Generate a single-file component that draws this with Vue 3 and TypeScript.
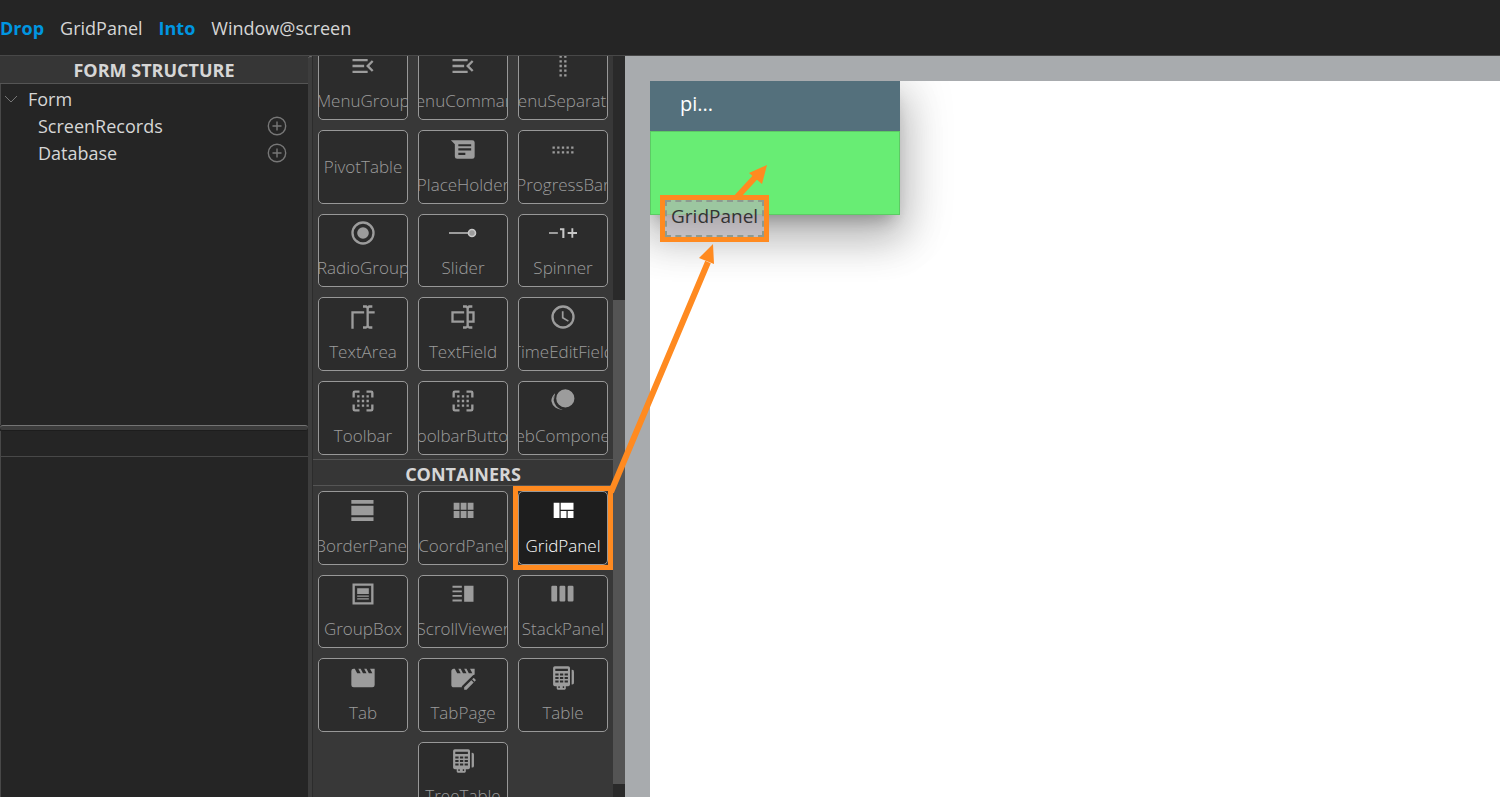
<script setup lang="ts">
interface Item {
  name: string
  icon?: string
  active?: boolean
  column?: number
}

const paths: Record<string, string> = {
  menu: 'M21,15.61L19.59,17L14.58,12L19.59,7L21,8.39L17.44,12L21,15.61M3,6H16V8H3V6M3,13V11H13V13H3M3,18V16H16V18H3Z',
  dotsV: 'M9,3H11V5H9V3M13,3H15V5H13V3M9,7H11V9H9V7M13,7H15V9H13V7M9,11H11V13H9V11M13,11H15V13H13V11M9,15H11V17H9V15M13,15H15V17H13V15M9,19H11V21H9V19M13,19H15V21H13V19Z',
  dotsH: 'M3,15V13H5V15H3M3,11V9H5V11H3M7,15V13H9V15H7M7,11V9H9V11H7M11,15V13H13V15H11M11,11V9H13V11H11M15,15V13H17V15H15M15,11V9H17V11H15M19,15V13H21V15H19M19,11V9H21V11H19Z',
  message: 'M1.6,3.6H20A2,2 0 0,1 22,5.6V17.6A2,2 0 0,1 20,19.6H7A2,2 0 0,1 5,17.6V7ZM8,7V8.8H19V7ZM8,10.6V12.4H19V10.6ZM8,14.4V16.2H14V14.4Z',
  radio: 'M12,2A10,10 0 1,0 12,22A10,10 0 1,0 12,2ZM12,4A8,8 0 1,1 12,20A8,8 0 1,1 12,4ZM12,7A5,5 0 1,1 12,17A5,5 0 1,1 12,7Z',
  textArea: 'M17,7H22V9H17V19A1,1 0 0,0 18,20H20V22H17.5C16.95,22 16,21.55 16,21C16,21.55 15.05,22 14.5,22H12V20H14A1,1 0 0,0 15,19V5A1,1 0 0,0 14,4H12V2H14.5C15.05,2 16,2.45 16,3C16,2.45 16.95,2 17.5,2H20V4H18A1,1 0 0,0 17,5V7M2,7H13V9H4V22H2V7Z',
  textField: 'M17,7H22V17H17V19A1,1 0 0,0 18,20H20V22H17.5C16.95,22 16,21.55 16,21C16,21.55 15.05,22 14.5,22H12V20H14A1,1 0 0,0 15,19V5A1,1 0 0,0 14,4H12V2H14.5C15.05,2 16,2.45 16,3C16,2.45 16.95,2 17.5,2H20V4H18A1,1 0 0,0 17,5V7M2,7H13V9H4V15H13V17H2V7M20,15V9H17V15H20Z',
  clock: 'M12,20A8,8 0 0,0 20,12A8,8 0 0,0 12,4A8,8 0 0,0 4,12A8,8 0 0,0 12,20M12,2A10,10 0 0,1 22,12A10,10 0 0,1 12,22A10,10 0 0,1 2,12A10,10 0 0,1 12,2M12.5,7V12.25L17,14.92L16.25,16.15L11,13V7H12.5Z',
  toolbar: 'M5,3H9V5H5V9H3V5A2,2 0 0,1 5,3ZM15,3H19A2,2 0 0,1 21,5V9H19V5H15ZM3,15H5V19H9V21H5A2,2 0 0,1 3,19ZM19,15H21V19A2,2 0 0,1 19,21H15V19H19ZM7,7H9V9H7ZM11,7H13V9H11ZM15,7H17V9H15ZM7,11H9V13H7ZM11,11H13V13H11ZM15,11H17V13H15ZM7,15H9V17H7ZM11,15H13V17H11ZM15,15H17V17H15Z',
  circles: 'M14,2A7.8,7.8 0 1,1 14,17.6A7.8,7.8 0 1,1 14,2ZM5.6,5.2A9,9 0 0,0 12,19.2A9.6,9.6 0 0,1 4,12A9,9 0 0,1 5.6,5.2ZM5.2,5.4A9.4,9.4 0 0,0 2,12A9,9 0 0,0 11.8,19.4A9.6,9.6 0 0,1 4,12Z',
  border: 'M2,2.6H21V5.8H2ZM2,7.6H21V15.6H2ZM2,17.4H21V20.6H2Z',
  coord: 'M16,5V11H21V5M10,11H15V5H10M16,18H21V12H16M10,18H15V12H10M4,18H9V12H4M4,11H9V5H4V11Z',
  grid: 'M10,5V11H21V5M16,18H21V12H16M4,18H9V5H4M10,18H15V12H10V18Z',
  group: 'M3,3H21V21H3ZM5,5V19H19V5ZM7,7H17V12H7ZM7,13.2H17V14.4H7ZM7,15.6H17V16.8H7Z',
  scroll: 'M3,5H11V6.6H3ZM3,9H11V10.6H3ZM3,12.8H11V14.4H3ZM3,16.8H11V18.4H3ZM13,5H21V18.6H13Z',
  stack: 'M3,5H6A1,1 0 0,1 7,6V17.4A1,1 0 0,1 6,18.4H3A1,1 0 0,1 2,17.4V6A1,1 0 0,1 3,5ZM10,5H13A1,1 0 0,1 14,6V17.4A1,1 0 0,1 13,18.4H10A1,1 0 0,1 9,17.4V6A1,1 0 0,1 10,5ZM17,5H20A1,1 0 0,1 21,6V17.4A1,1 0 0,1 20,18.4H17A1,1 0 0,1 16,17.4V6A1,1 0 0,1 17,5Z',
  tab: 'M18,4L20,8H17L15,4H13L15,8H12L10,4H8L10,8H7L5,4H4A2,2 0 0,0 2,6V18A2,2 0 0,0 4,20H20A2,2 0 0,0 22,18V4H18Z',
  tabPage: 'M22.85,13.47L21.53,12.15C21.33,11.95 21,11.95 20.81,12.15L19.83,13.13L21.87,15.17L22.85,14.19C23.05,14 23.05,13.67 22.85,13.47M13,19.96V22H15.04L21.17,15.88L19.13,13.83L13,19.96M18,4L20,8H17L15,4H13L15,8H12L10,4H8L10,8H7L5,4H4C2.9,4 2,4.9 2,6V18C2,19.1 2.9,20 4,20H11V19.13L20.6,9.6L22,9V4H18Z',
  table: 'M5,2H16.5A1.5,1.5 0 0,1 18,3.5V17.6A1.5,1.5 0 0,1 16.5,19H14.4V21A1,1 0 0,1 13.4,22H7.6A1,1 0 0,1 6.6,21V19H5A1.5,1.5 0 0,1 3.5,17.6V3.5A1.5,1.5 0 0,1 5,2ZM5.4,4V6H16.2V4ZM5.4,8.2V9.8H8.2V8.2ZM9.4,8.2V9.8H12.2V8.2ZM13.4,8.2V9.8H16.2V8.2ZM5.4,11.2V12.8H8.2V11.2ZM9.4,11.2V12.8H12.2V11.2ZM13.4,11.2V12.8H16.2V11.2ZM5.4,14.2V15.8H8.2V14.2ZM9.4,14.2V15.8H12.2V14.2ZM13.4,14.2V15.8H16.2V14.2ZM8,19V20.6H9.2V19ZM11.8,19V20.6H13V19ZM19.4,5A1.8,1.8 0 0,1 21.4,7V15.6A1.8,1.8 0 0,1 19.4,17.6Z',
}

const components: Item[] = [
  { name: 'MenuGroup', icon: 'menu' },
  { name: 'MenuCommand', icon: 'menu' },
  { name: 'MenuSeparator', icon: 'dotsV' },
  { name: 'PivotTable' },
  { name: 'PlaceHolder', icon: 'message' },
  { name: 'ProgressBar', icon: 'dotsH' },
  { name: 'RadioGroup', icon: 'radio' },
  { name: 'Slider', icon: 'slider' },
  { name: 'Spinner', icon: 'spinner' },
  { name: 'TextArea', icon: 'textArea' },
  { name: 'TextField', icon: 'textField' },
  { name: 'TimeEditField', icon: 'clock' },
  { name: 'Toolbar', icon: 'toolbar' },
  { name: 'ToolbarButton', icon: 'toolbar' },
  { name: 'WebComponent', icon: 'circles' },
]

const containers: Item[] = [
  { name: 'BorderPanel', icon: 'border' },
  { name: 'CoordPanel', icon: 'coord' },
  { name: 'GridPanel', icon: 'grid', active: true },
  { name: 'GroupBox', icon: 'group' },
  { name: 'ScrollViewer', icon: 'scroll' },
  { name: 'StackPanel', icon: 'stack' },
  { name: 'Tab', icon: 'tab' },
  { name: 'TabPage', icon: 'tabPage' },
  { name: 'Table', icon: 'table' },
  { name: 'TreeTable', icon: 'table', column: 2 },
]

const groups = [
  { id: 'components', title: '', items: components },
  { id: 'containers', title: 'CONTAINERS', items: containers },
]

const sources = ['ScreenRecords', 'Database']
</script>

<template>
  <div class="designer">
    <header class="status">
      <b>Drop</b><span>GridPanel</span><b>Into</b><span>Window@screen</span>
    </header>

    <div class="workspace">
      <aside class="structure">
        <h2 class="heading">FORM STRUCTURE</h2>
        <div class="tree">
          <div class="node root">
            <svg class="chevron" viewBox="0 0 14 8"><path d="M1 1l6 6 6-6" /></svg>
            <span>Form</span>
          </div>
          <div v-for="source in sources" :key="source" class="node child">
            <span>{{ source }}</span>
            <button class="add" type="button" :aria-label="'Add ' + source">
              <svg viewBox="0 0 20 20"><circle cx="10" cy="10" r="8.7" /><path d="M10 5.5v9M5.5 10h9" /></svg>
            </button>
          </div>
        </div>
        <div class="splitter"></div>
        <div class="props-head"></div>
        <div class="props"></div>
      </aside>

      <div class="divider"></div>

      <section class="palette">
        <div class="scroller">
          <template v-for="group in groups" :key="group.id">
            <h2 v-if="group.title" class="heading group-title">{{ group.title }}</h2>
            <div class="tiles" :class="group.id">
              <div
                v-for="item in group.items"
                :key="item.name"
                class="cell"
                :class="{ active: item.active, second: item.column === 2 }"
              >
                <button type="button" class="tile">
                  <svg v-if="item.icon === 'slider'" class="icon" viewBox="0 0 24 24">
                    <path d="M0 11.2h17v1.6H0z" />
                    <circle class="knob" cx="19.7" cy="12" r="3" />
                  </svg>
                  <svg v-else-if="item.icon === 'spinner'" class="icon" viewBox="0 0 24 24">
                    <path d="M0 11.2h7.6v1.6H0z" />
                    <path class="bright" d="M9.4 8h3.8v8.2h-1.8V9.6h-2zM19.2 8h1.6v3.2H24v1.6h-3.2V16h-1.6v-3.2H16v-1.6h3.2z" />
                  </svg>
                  <svg v-else-if="item.icon" class="icon" viewBox="0 0 24 24">
                    <path :fill-rule="item.icon === 'circles' ? 'nonzero' : 'evenodd'" :d="paths[item.icon]" />
                  </svg>
                  <span class="label">{{ item.name }}</span>
                </button>
              </div>
            </div>
          </template>
        </div>
        <div class="track">
          <div class="track-before"></div>
          <div class="thumb"></div>
          <div class="track-after"></div>
        </div>
      </section>

      <main class="canvas">
        <div class="sheet">
          <div class="window">
            <div class="window-title">pi...</div>
            <div class="drop-zone"></div>
          </div>
        </div>
      </main>

      <div class="drag-chip"><span>GridPanel</span></div>
      <svg class="arrows" viewBox="0 0 200 360">
        <path class="shaft" d="M11 336L108 106M137 41L160 16" />
        <path class="head" d="M113 88L99 102 114 108zM167 9L149 17 162 28z" />
      </svg>
    </div>
  </div>
</template>

<style>
html,
body,
#app {
  height: 100%;
}

body {
  margin: 0;
  overflow: hidden;
}
</style>

<style scoped>
* {
  box-sizing: border-box;
}

.designer {
  display: flex;
  flex-direction: column;
  height: 100vh;
  overflow: hidden;
  background: #252525;
  color: #d6d6d6;
  font-family: "Segoe UI", "Open Sans", "Noto Sans", sans-serif;
  font-size: 18px;
}

.status {
  display: flex;
  flex: none;
  align-items: center;
  gap: 16px;
  height: 56px;
  border-bottom: 1px solid #484848;
}

.status b {
  color: #0096e0;
}

.workspace {
  position: relative;
  display: flex;
  flex: 1;
  min-height: 0;
}

.structure {
  display: flex;
  flex: none;
  flex-direction: column;
  width: 308px;
}

.heading {
  flex: none;
  height: 28px;
  margin: 0;
  border-bottom: 1px solid #555;
  background: #363636;
  font-size: 18px;
  font-weight: 700;
  line-height: 28px;
  text-align: center;
}

.tree {
  flex: none;
  height: 341px;
  padding-top: 1px;
  border-left: 1px solid #484848;
}

.node {
  display: flex;
  align-items: center;
  height: 27px;
}

.root {
  gap: 10px;
  padding-left: 3px;
}

.chevron {
  width: 14px;
  height: 8px;
  fill: none;
  stroke: #777;
}

.child {
  justify-content: space-between;
  padding: 0 21px 0 37px;
}

.add {
  width: 20px;
  height: 20px;
  padding: 0;
  border: 0;
  background: none;
}

.add svg {
  display: block;
  fill: none;
  stroke: #777;
  stroke-width: 1.4;
}

.splitter {
  flex: none;
  height: 6px;
  border-top: 1px solid #747474;
  border-bottom: 1px solid #1d1d1d;
  border-radius: 3px;
  background: #3c3c3c;
}

.props-head {
  flex: none;
  height: 26px;
  border-bottom: 1px solid #484848;
  border-left: 1px solid #484848;
}

.props {
  flex: 1;
  border-left: 1px solid #484848;
}

.divider {
  flex: none;
  width: 5px;
  border-top: 1px solid #707070;
  border-right: 1px solid #2c2c2c;
  border-radius: 3px 3px 0 0;
  background: #3d3d3d;
}

.palette {
  display: flex;
  flex: none;
  width: 312px;
  background: #383838;
}

.scroller {
  flex: 1;
  min-width: 0;
  overflow: hidden;
}

.tiles {
  display: grid;
  grid-template-columns: repeat(3, 1fr);
  gap: 10px;
  padding: 0 5px;
}

.components {
  grid-template-rows: repeat(5, 1fr);
  height: 409px;
  margin: -10px 0 4px;
}

.containers {
  grid-template-rows: repeat(4, 1fr);
  height: 324px;
  margin-top: 5px;
}

.group-title {
  height: 27px;
  border-top: 1px solid #555;
}

.cell {
  display: flex;
  min-width: 0;
  min-height: 0;
}

.tile {
  display: flex;
  flex: 1;
  flex-direction: column;
  align-items: center;
  justify-content: center;
  gap: 7px;
  min-width: 0;
  padding: 1px 0 0;
  overflow: hidden;
  border: 1px solid #989898;
  border-radius: 5px;
  background: #2c2c2c;
  color: #9c9c9c;
  font-family: inherit;
  font-size: 17px;
  font-weight: 300;
}

.second {
  grid-column: 2;
}

.active {
  outline: 5px solid #ff8a20;
}

.active .tile {
  background: #1e1e1e;
  color: #fff;
}

.icon {
  flex: none;
  width: 28px;
  height: 28px;
  overflow: visible;
  fill: currentColor;
}

.knob {
  stroke: #c8c8c8;
  stroke-width: 1.4;
}

.bright {
  fill: #c8c8c8;
}

.label {
  line-height: 28px;
  white-space: nowrap;
}

.track {
  display: flex;
  flex: none;
  flex-direction: column;
  width: 12px;
  background: #2a2a2a;
}

.track-before {
  flex: 244;
}

.thumb {
  flex: 484;
  background: #545454;
}

.track-after {
  flex: 13;
}

.canvas {
  flex: 1;
  min-width: 0;
  padding: 25px 0 0 25px;
  background: #a8abae;
}

.sheet {
  height: 100%;
  overflow: hidden;
  background: #fff;
}

.window {
  width: 250px;
  box-shadow: 0 11px 15px -7px rgba(0, 0, 0, 0.24), 0 24px 38px 3px rgba(0, 0, 0, 0.18), 0 9px 46px 8px rgba(0, 0, 0, 0.16);
}

.window-title {
  height: 50px;
  padding-left: 30px;
  background: #54707c;
  color: #fff;
  font-size: 20px;
  line-height: 46px;
}

.drop-zone {
  height: 84px;
  border: 1px solid #5ccb64;
  background: #68ed74;
}

.drag-chip {
  position: absolute;
  top: 139px;
  left: 660px;
  border: 5px solid #ff8a20;
}

.drag-chip span {
  display: block;
  height: 37px;
  padding: 0 4px;
  border: 2px dashed #8d9a90;
  background: rgba(185, 178, 184, 0.65);
  color: #333;
  font-size: 19px;
  line-height: 28px;
}

.arrows {
  position: absolute;
  top: 100px;
  left: 600px;
  width: 200px;
  height: 360px;
  pointer-events: none;
}

.shaft {
  fill: none;
  stroke: #ff8a20;
  stroke-width: 6;
}

.head {
  fill: #ff8a20;
}
</style>
